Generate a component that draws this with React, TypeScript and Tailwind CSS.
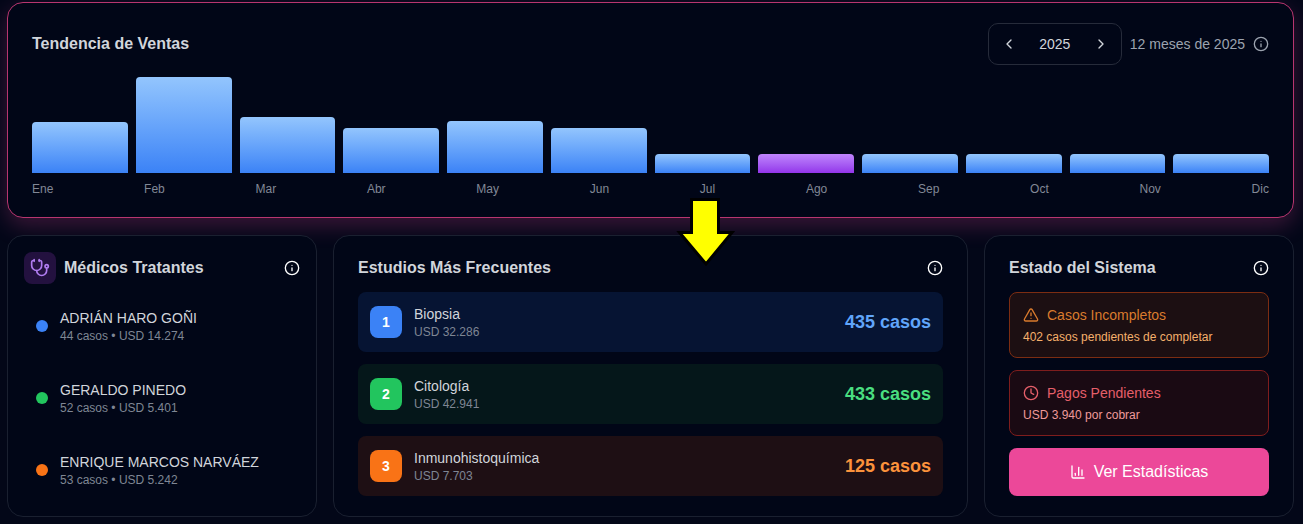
import React from 'react';
import { AlertTriangle, ChartColumn, ChevronLeft, ChevronRight, Clock, Info, Stethoscope } from 'lucide-react';

const months = [
  { label: 'Ene', height: 51 },
  { label: 'Feb', height: 96 },
  { label: 'Mar', height: 56 },
  { label: 'Abr', height: 45 },
  { label: 'May', height: 52 },
  { label: 'Jun', height: 45 },
  { label: 'Jul', height: 19 },
  { label: 'Ago', height: 19, active: true },
  { label: 'Sep', height: 19 },
  { label: 'Oct', height: 19 },
  { label: 'Nov', height: 19 },
  { label: 'Dic', height: 19 },
];

const doctors = [
  { name: 'ADRIÁN HARO GOÑI', sub: '44 casos • USD 14.274', dot: 'bg-[#3b82f6]' },
  { name: 'GERALDO PINEDO', sub: '52 casos • USD 5.401', dot: 'bg-[#22c55e]' },
  { name: 'ENRIQUE MARCOS NARVÁEZ', sub: '53 casos • USD 5.242', dot: 'bg-[#f97316]' },
];

const studies = [
  { rank: 1, name: 'Biopsia', sub: 'USD 32.286', cases: '435 casos', row: 'bg-[#061433]', badge: 'bg-[#3b82f6]', text: 'text-[#60a5fa]' },
  { rank: 2, name: 'Citología', sub: 'USD 42.941', cases: '433 casos', row: 'bg-[#05171a]', badge: 'bg-[#22c55e]', text: 'text-[#4ade80]' },
  { rank: 3, name: 'Inmunohistoquímica', sub: 'USD 7.703', cases: '125 casos', row: 'bg-[#1e0f14]', badge: 'bg-[#f97316]', text: 'text-[#fb923c]' },
];

export default function App() {
  return (
    <div className="relative h-[524px] w-[1303px] overflow-hidden bg-[#030718] font-['Liberation_Sans',Arial,sans-serif]">
      <div className="flex flex-col gap-[17px] pl-[7px] pr-[9px] pt-[2px]">
        {/* TENDENCIA */}
        <section className="h-[216px] rounded-2xl border border-[#b8356f] bg-[#010617] px-6 pt-5 shadow-[0_8px_22px_rgba(236,72,153,0.24)]">
          <div className="flex h-[42px] items-center justify-between">
            <h2 className="text-base font-bold text-[#d1d5db]">Tendencia de Ventas</h2>
            <div className="flex items-center gap-2">
              <div className="flex h-[42px] w-[134px] items-center justify-between rounded-[10px] border border-[#262b3a] px-3">
                <ChevronLeft className="size-4 text-[#d1d5db]" />
                <span className="text-sm font-medium text-[#d1d5db]">2025</span>
                <ChevronRight className="size-4 text-[#d1d5db]" />
              </div>
              <span className="text-sm text-[#9ca3af]">12 meses de 2025</span>
              <Info className="size-4 text-[#9ca3af]" />
            </div>
          </div>
          <div className="mt-[12px] flex h-[96px] items-end gap-2">
            {months.map((m) => (
              <div
                key={m.label}
                className={`flex-1 rounded-t ${m.active ? 'bg-linear-to-b from-[#c084fc] to-[#9333ea]' : 'bg-linear-to-b from-[#93c5fd] to-[#3b82f6]'}`}
                style={{ height: m.height }}
              />
            ))}
          </div>
          <div className="mt-2 flex justify-between text-xs leading-4 text-[#828896]">
            {months.map((m) => (
              <span key={m.label}>{m.label}</span>
            ))}
          </div>
        </section>

        <div className="grid h-[282px] grid-cols-[310px_635px_310px] gap-4">
          {/* MEDICOS */}
          <section className="rounded-2xl border border-[#1a2030] bg-[#010617] px-4 pt-4">
            <div className="flex h-8 items-center justify-between">
              <div className="flex items-center gap-2">
                <div className="flex size-8 items-center justify-center rounded-lg bg-[#23113f]">
                  <Stethoscope className="size-5 text-[#b07cf0]" />
                </div>
                <h2 className="text-base font-bold text-[#d1d5db]">Médicos Tratantes</h2>
              </div>
              <Info className="size-4 text-white" />
            </div>
            <div className="mt-[14px] flex flex-col gap-4">
              {doctors.map((d) => (
                <div key={d.name} className="flex h-14 items-center gap-3 px-3">
                  <span className={`size-3 rounded-full ${d.dot}`} />
                  <div>
                    <p className="text-sm leading-5 text-[#d1d5db]">{d.name}</p>
                    <p className="text-xs leading-4 text-[#7f8694]">{d.sub}</p>
                  </div>
                </div>
              ))}
            </div>
          </section>

          {/* ESTUDIOS */}
          <section className="rounded-2xl border border-[#1a2030] bg-[#010617] px-6 pt-5">
            <div className="flex h-6 items-center justify-between">
              <h2 className="text-base font-bold text-[#d1d5db]">Estudios Más Frecuentes</h2>
              <Info className="size-4 text-white" />
            </div>
            <div className="mt-3 flex flex-col gap-3">
              {studies.map((s) => (
                <div key={s.rank} className={`flex h-[60px] items-center justify-between rounded-lg px-3 ${s.row}`}>
                  <div className="flex items-center gap-3">
                    <div className={`flex size-8 items-center justify-center rounded-lg text-sm font-bold text-white ${s.badge}`}>{s.rank}</div>
                    <div>
                      <p className="text-sm leading-5 text-[#d1d5db]">{s.name}</p>
                      <p className="text-xs leading-4 text-[#7f8694]">{s.sub}</p>
                    </div>
                  </div>
                  <span className={`text-lg font-bold ${s.text}`}>{s.cases}</span>
                </div>
              ))}
            </div>
          </section>

          {/* SISTEMA */}
          <section className="rounded-2xl border border-[#1a2030] bg-[#010617] px-6 pt-5">
            <div className="flex h-6 items-center justify-between">
              <h2 className="text-base font-bold text-[#d1d5db]">Estado del Sistema</h2>
              <Info className="size-4 text-white" />
            </div>
            <div className="mt-3 flex flex-col gap-3">
              <div className="h-[66px] rounded-lg border border-[#7c2d12] bg-[#1c0f12] px-[13px] pt-3">
                <div className="flex items-center gap-2 text-sm leading-5 text-[#d97b2d]">
                  <AlertTriangle className="size-4" /> Casos Incompletos
                </div>
                <p className="mt-1 text-xs leading-4 text-[#f5b06c]">402 casos pendientes de completar</p>
              </div>
              <div className="h-[66px] rounded-lg border border-[#7f1d1d] bg-[#1a0a13] px-[13px] pt-3">
                <div className="flex items-center gap-2 text-sm leading-5 text-[#e55f6a]">
                  <Clock className="size-4" /> Pagos Pendientes
                </div>
                <p className="mt-1 text-xs leading-4 text-[#f09a9a]">USD 3.940 por cobrar</p>
              </div>
              <button className="flex h-12 items-center justify-center gap-2 rounded-lg bg-[#ec4899] text-base font-medium text-white">
                <ChartColumn className="size-4" /> Ver Estadísticas
              </button>
            </div>
          </section>
        </div>
      </div>

      {/* flecha amarilla encima */}
      <svg className="absolute left-[672px] top-[194px]" width="68" height="74" viewBox="672 194 68 74">
        <polygon points="691.5,199.5 718.5,199.5 718.5,232.5 732,232.5 706,264 679.5,232.5 691.5,232.5" fill="#ffff00" stroke="#000000" strokeWidth="3" />
      </svg>
    </div>
  );
}
